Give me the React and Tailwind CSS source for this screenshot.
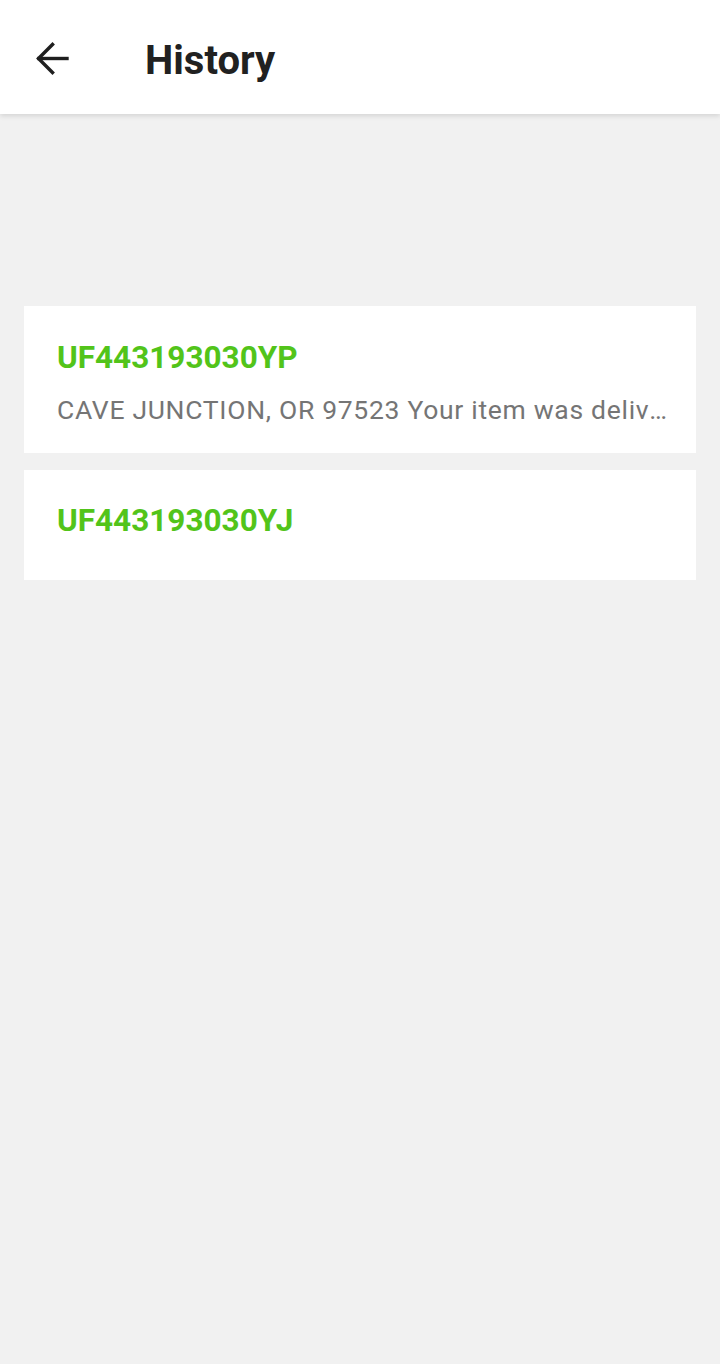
import React from 'react';

const items = [
    { id: 'UF443193030YP', desc: 'CAVE JUNCTION, OR 97523 Your item was delivered in or at the mailbox at 11:42 am' },
    { id: 'UF443193030YJ', desc: '' },
];

export default function App() {
    return (
        <div className="min-h-[1364px] bg-[#f1f1f1] font-['Roboto',sans-serif]">
            {/* Toolbar */}
            <div className="h-[114px] bg-white flex items-center pl-[36px] shadow-[0_2px_5px_rgba(0,0,0,0.12)] relative">
                <button className="w-[33px] h-[33px] flex items-center justify-center mt-[2px]">
                    <svg width="33" height="33" viewBox="0 0 33 33" fill="none" stroke="#1f1f1f" strokeWidth="3.4" strokeLinecap="square">
                        <path d="M31 16.5H3" />
                        <path d="M16.5 2.5L2.5 16.5l14 14" />
                    </svg>
                </button>
                <h1 className="ml-[76px] mt-[7px] text-[40px] leading-[40px] font-bold text-[#212121]">History</h1>
            </div>

            {/* History list */}
            <div className="px-6 pt-[192px] flex flex-col gap-[17px]">
                {items.map((item) => (
                    <div key={item.id} className={`bg-white pl-[33px] pr-[28px] ${item.desc ? 'pt-[34px] pb-[28px]' : 'pt-[33px] pb-[41px]'}`}>
                        <div className="text-[31.5px] leading-[36px] font-bold text-[#52c41a]">{item.id}</div>
                        {item.desc && (
                            <div className="mt-[19px] text-[26.5px] leading-[30px] tracking-[0.7px] text-[#757575] truncate">{item.desc}</div>
                        )}
                    </div>
                ))}
            </div>
        </div>
    );
}
